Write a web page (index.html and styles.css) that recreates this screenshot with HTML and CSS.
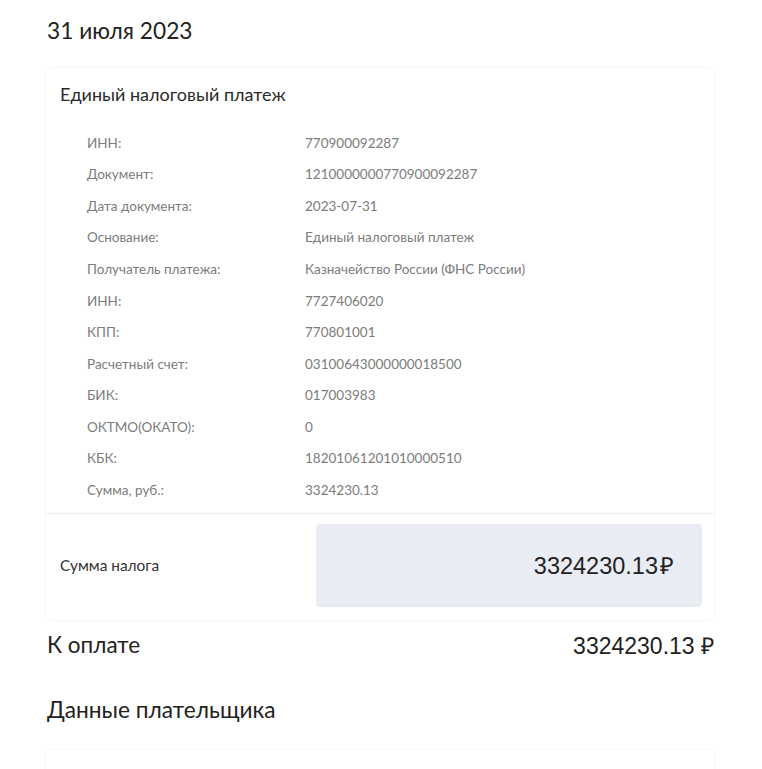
FILE: index.html
```html
<!DOCTYPE html>
<html lang="ru">
<head>
<meta charset="utf-8">
<link rel="stylesheet" href="styles.css">
</head>
<body>
<main class="page">
  <h1 class="date">31 июля 2023</h1>
  <section class="card">
    <div class="card-top">
      <h2 class="card-title">Единый налоговый платеж</h2>
      <dl class="rows">
        <div class="row"><dt>ИНН:</dt><dd>770900092287</dd></div>
        <div class="row"><dt>Документ:</dt><dd>1210000000770900092287</dd></div>
        <div class="row"><dt>Дата документа:</dt><dd>2023-07-31</dd></div>
        <div class="row"><dt>Основание:</dt><dd>Единый налоговый платеж</dd></div>
        <div class="row"><dt>Получатель платежа:</dt><dd>Казначейство России (ФНС России)</dd></div>
        <div class="row"><dt>ИНН:</dt><dd>7727406020</dd></div>
        <div class="row"><dt>КПП:</dt><dd>770801001</dd></div>
        <div class="row"><dt>Расчетный счет:</dt><dd>03100643000000018500</dd></div>
        <div class="row"><dt>БИК:</dt><dd>017003983</dd></div>
        <div class="row"><dt>ОКТМО(ОКАТО):</dt><dd>0</dd></div>
        <div class="row"><dt>КБК:</dt><dd>18201061201010000510</dd></div>
        <div class="row"><dt>Сумма, руб.:</dt><dd>3324230.13</dd></div>
      </dl>
    </div>
    <div class="card-bottom">
      <span class="tax-label">Сумма налога</span>
      <div class="tax-box"><span class="tax-amount">3324230.13<span class="rub">₽</span></span></div>
    </div>
  </section>
  <div class="total">
    <span class="total-label">К оплате</span>
    <span class="total-amount">3324230.13 ₽</span>
  </div>
  <h2 class="section-title">Данные плательщика</h2>
  <section class="card card-next"></section>
</main>
</body>
</html>
```
FILE: styles.css
```css
* { box-sizing: border-box; }
html, body { margin: 0; padding: 0; background: #fff; }
body { font-family: Lato, "Noto Sans", sans-serif; color: #222; }
.page { width: 668px; margin-left: 46px; padding-top: 16px; }
.date { margin: 0; font-size: 22.7px; font-weight: 400; line-height: 30px; color: #222; padding-left: 1px; }
.card {
  margin-top: 22px;
  background: #fff;
  border-radius: 4px;
  box-shadow: 0 0 3px rgba(0,0,0,0.07);
}
.card-top { padding: 14px 0 7px 0; border-bottom: 1px solid #eceef0; }
.card-title { margin: 0 0 0 14px; font-size: 18px; font-weight: 400; line-height: 24px; color: #2a2a2a; }
.rows { margin: 21px 0 0 41px; padding: 0; }
.row { display: flex; height: 31.55px; align-items: center; }
.row dt { width: 218px; margin: 0; font-size: 13.5px; color: #7c7c7c; }
.row dd { margin: 0; font-size: 13.5px; color: #7c7c7c; }
.card-bottom { display: flex; align-items: center; padding: 10px 12px 13px 14px; }
.tax-label { flex: 0 0 256px; font-size: 15.4px; color: #333; }
.tax-box {
  flex: 1;
  height: 83px;
  background: #e9ecf2;
  border-radius: 4px;
  display: flex;
  align-items: center;
  justify-content: flex-end;
  padding-right: 28px;
}
.tax-amount { font-size: 23.5px; color: #222; font-family: "Liberation Sans", Arial, sans-serif; }
.rub { margin-left: 2px; }
.total { display: flex; justify-content: space-between; align-items: center; margin-top: 9px; padding-left: 1px; }
.total-label { font-size: 22.5px; color: #222; }
.total-amount { font-size: 23px; color: #222; font-family: "Liberation Sans", Arial, sans-serif; }
.section-title { margin: 34px 0 0 1px; font-size: 22.7px; font-weight: 400; line-height: 30px; color: #222; }
.card-next { margin-top: 25px; height: 40px; border-radius: 4px 4px 0 0; }
```
